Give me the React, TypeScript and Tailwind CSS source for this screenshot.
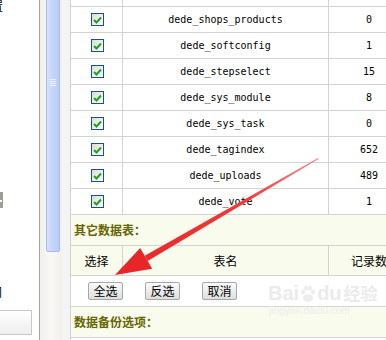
import React from "react";

const rows = [
  { name: "dede_shops_products", count: "0" },
  { name: "dede_softconfig", count: "1" },
  { name: "dede_stepselect", count: "15" },
  { name: "dede_sys_module", count: "8" },
  { name: "dede_sys_task", count: "0" },
  { name: "dede_tagindex", count: "652" },
  { name: "dede_uploads", count: "489" },
  { name: "dede_vote", count: "1" },
];

const cjk = "font-['SimSun','Noto_Sans_CJK_SC',sans-serif]";
const mono = "font-['DejaVu_Sans_Mono','Liberation_Mono',monospace]";

function Check() {
  return (
    <div className="w-[13px] h-[13px] border border-[#1c5180] bg-gradient-to-br from-[#dcdcd6] to-white flex items-center justify-center">
      <svg width="9" height="8" viewBox="0 0 9 8">
        <path d="M1 4 L3.5 6.5 L8 1.5" stroke="#21a121" strokeWidth="2" fill="none" />
      </svg>
    </div>
  );
}

function Btn({ label }: { label: string }) {
  return (
    <button className="w-[35px] h-[18px] border border-[#a7a7a7] rounded-[2px] bg-gradient-to-b from-[#fbfbfb] to-[#dedede] text-[12px] leading-[16px] text-black">
      {label}
    </button>
  );
}

export default function App() {
  return (
    <div className={`relative w-[386px] h-[340px] overflow-hidden bg-white flex ${cjk}`}>
      {/* left frame edge */}
      <div className="w-[39px] shrink-0 flex flex-col bg-white overflow-hidden">
        <span className="mt-[0px] ml-[-9px] text-[12px] leading-[12px] text-black whitespace-nowrap">置</span>
        <div className="mt-[180px] w-[3px] h-[16px] bg-[#9e9c95] flex items-center">
          <div className="w-[2px] h-[2px] bg-white mt-[2px]" />
        </div>
        <span className="mt-[78px] ml-[-10px] text-[12px] leading-[12px] text-black whitespace-nowrap">间</span>
        <div className="mt-[12px] ml-[-10px] w-[42px] h-[25px] border border-[#c8c8c8] bg-gradient-to-b from-white to-[#eeeeee]" />
      </div>
      <div className="w-px shrink-0 bg-[#a3a39c]" />

      {/* scrollbar */}
      <div className="w-[22px] shrink-0 flex flex-col bg-gradient-to-r from-[#f1f0ec] via-[#f8f8f6] to-[#f1f0ec]">
        <div className="ml-[6px] w-[14px] h-[256px] mt-[-4px] rounded-b-[2px] border border-[#a9bde9] bg-gradient-to-r from-[#d6e2fd] via-[#c3d4fb] to-[#b9cdf9] flex flex-col items-center pt-[82px] gap-[1px]">
          <div className="w-[6px] h-px bg-[#eef3ff]" />
          <div className="w-[6px] h-px bg-[#eef3ff]" />
          <div className="w-[6px] h-px bg-[#eef3ff]" />
          <div className="w-[6px] h-px bg-[#eef3ff]" />
        </div>
      </div>
      <div className="w-[8px] shrink-0 bg-[#f4f4f4]" />

      {/* table */}
      <div className="w-[339px] shrink-0 mt-[-20px] self-start bg-[#d3d3d3] p-px grid grid-cols-[51px_205px_80px] gap-px">
        <div className="h-[25px] bg-white" />
        <div className="h-[25px] bg-white" />
        <div className="h-[25px] bg-white" />
        {rows.map((r) => (
          <React.Fragment key={r.name}>
            <div className="h-[25px] bg-white flex items-center justify-center pl-[2px]">
              <Check />
            </div>
            <div className={`h-[25px] bg-white flex items-center justify-center text-[10px] text-black ${mono}`}>
              {r.name}
            </div>
            <div className={`h-[25px] bg-white flex items-center justify-center text-[10px] text-black ${mono}`}>
              {r.count}
            </div>
          </React.Fragment>
        ))}
        <div className="col-span-3 h-[30px] bg-[#f9fbec] flex items-center pl-[3px] text-[12px] font-bold text-[#666600]">
          其它数据表：
        </div>
        <div className="h-[29px] bg-[#f9fbec] flex items-center justify-center text-[12px] text-black">选择</div>
        <div className="h-[29px] bg-[#f9fbec] flex items-center justify-center text-[12px] text-black">表名</div>
        <div className="h-[29px] bg-[#f9fbec] flex items-center justify-center text-[12px] text-black">记录数</div>
        <div className="col-span-3 h-[30px] bg-white flex items-center pl-[17px] gap-[22px]">
          <Btn label="全选" />
          <Btn label="反选" />
          <Btn label="取消" />
        </div>
        <div className="col-span-3 h-[30px] bg-[#f9fbec] flex items-center pl-[3px] text-[12px] font-bold text-[#666600]">
          数据备份选项：
        </div>
        <div className="col-span-3 h-[30px] bg-white" />
      </div>

      {/* baidu watermark */}
      <div className="absolute left-[268px] top-[283px] flex flex-col items-start text-[#ebebeb] pointer-events-none">
        <div className="flex items-end font-['Liberation_Sans',sans-serif] text-[20px] font-bold leading-[20px]">
          <span>Bai</span>
          <svg width="16" height="18" viewBox="0 0 16 18" className="mx-[1px]">
            <ellipse cx="8" cy="13" rx="5" ry="4" fill="#ededed" />
            <ellipse cx="3" cy="7" rx="2" ry="2.5" fill="#ededed" />
            <ellipse cx="13" cy="7" rx="2" ry="2.5" fill="#ededed" />
            <ellipse cx="6" cy="3" rx="2" ry="2.5" fill="#ededed" />
            <ellipse cx="10" cy="3" rx="2" ry="2.5" fill="#ededed" />
          </svg>
          <span>du</span>
          <span className={`ml-[2px] text-[17px] ${cjk}`}>经验</span>
        </div>
        <span className="font-['Liberation_Sans',sans-serif] text-[10px] leading-[12px] mt-[2px] ml-[1px] text-[#eeeeee]">jingyan.baidu.com</span>
      </div>

      {/* red arrow */}
      <svg className="absolute left-0 top-0 pointer-events-none" width="386" height="340" viewBox="0 0 386 340">
        <defs>
          <linearGradient id="ag" x1="318" y1="158" x2="116" y2="276" gradientUnits="userSpaceOnUse">
            <stop offset="0" stopColor="#f58a8a" />
            <stop offset="0.35" stopColor="#ee3b3b" />
            <stop offset="1" stopColor="#e8262a" />
          </linearGradient>
        </defs>
        <polygon
          points="318,158 318.6,159 147.7,261 144.7,255.8"
          fill="url(#ag)"
        />
        <polygon points="115,275 140.2,248 152.2,268.8" fill="#e8262a" />
      </svg>
    </div>
  );
}
